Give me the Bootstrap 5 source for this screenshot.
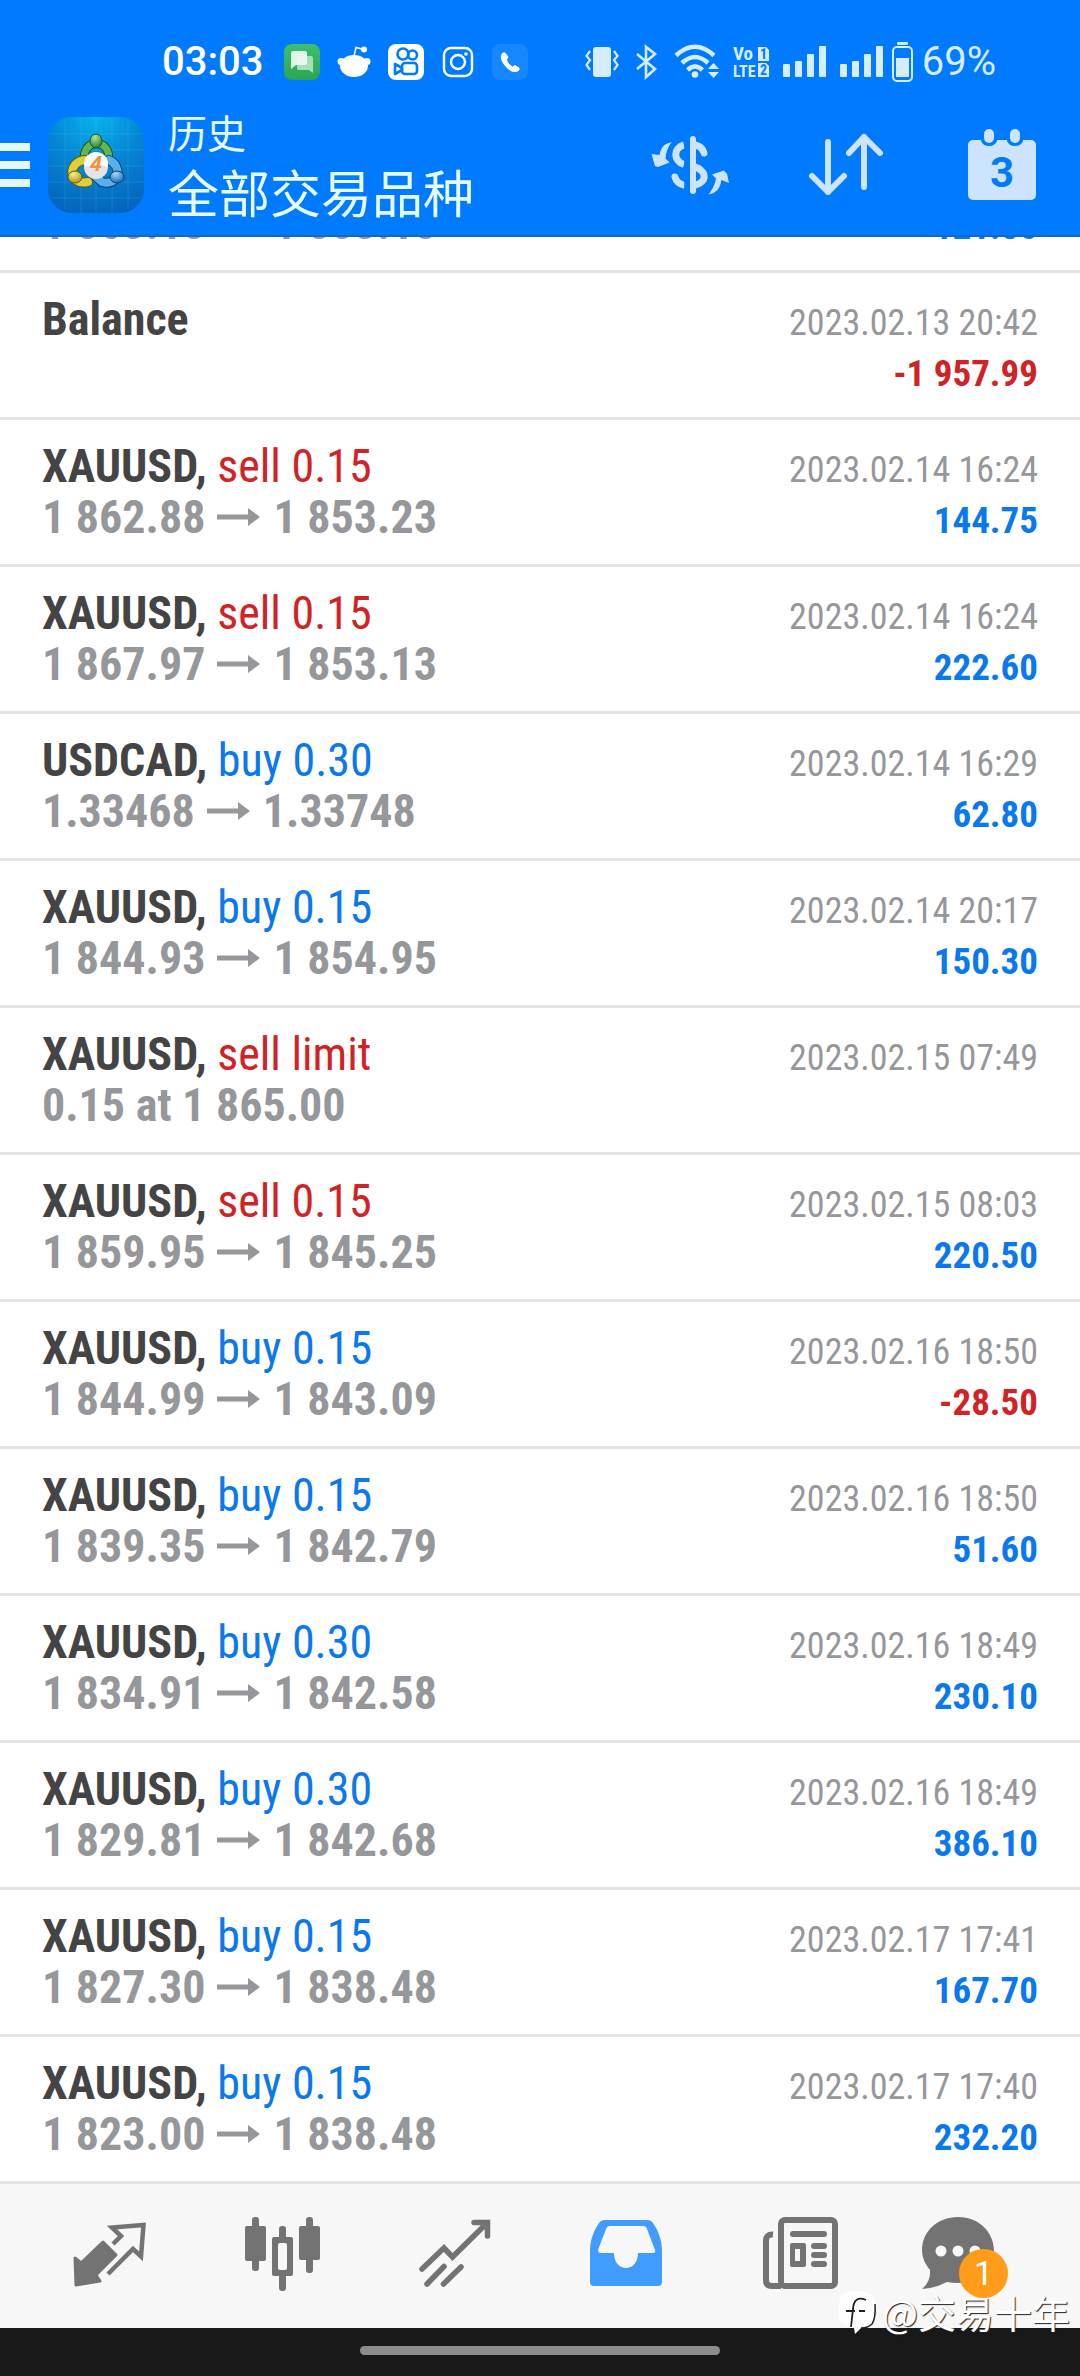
<!DOCTYPE html>
<html lang="zh-CN">
<head>
<meta charset="utf-8">
<meta name="viewport" content="width=device-width, initial-scale=1">
<title>历史 - 全部交易品种</title>
<link href="https://cdn.jsdelivr.net/npm/bootstrap@5.3.0/dist/css/bootstrap.min.css" rel="stylesheet">
<style>
:root{--mt-blue:#007aff;--mt-tint:#cce4ff;--mt-line:#e4e4e4;--mt-icon:#737373}
body{font-family:"Roboto Condensed",Roboto,"Noto Sans CJK SC",sans-serif;background:#fff}
svg{display:block;flex:none}
.top-area{background:var(--mt-blue);border-bottom:2px solid #1468c8;color:#fff}
.status-row{padding:42px 84px 0 162px;font:400 40px/40px Roboto,sans-serif}
.status-left{gap:16px}
.status-left .clock{margin-right:5px;font-weight:500}
.status-right{gap:14px;color:#d6ecff}
.status-end{gap:9px}
.app-row{padding:23px 0 10px}
.app-row .btn,.tab-row a{border:0;border-radius:0;padding:0}
.menu-btn{margin-right:18px}
.heading-block{margin-left:24px;font-family:"Noto Sans CJK SC",sans-serif;color:#e6fbff}
.heading-block h1{font-size:39px;line-height:52px;font-weight:400}
.heading-block p{font-size:51px;line-height:68px}
.tool-btn{width:156px;height:120px}
.history{flex-direction:column-reverse;scrollbar-width:none}
.history::-webkit-scrollbar{display:none}
.deal{padding:21px 42px;border-bottom:3px solid var(--mt-line)}
.deal-line{font-size:46px;line-height:51px;height:51px}
.symbol{color:#444;font-weight:700}
.price{color:#96979b;font-weight:700}
.price svg{display:inline-block;margin:0 13px 0 12px;vertical-align:7px}
.stamp{font-size:36px;line-height:40px;color:#96979b}
.profit{font-size:37px;line-height:40px;font-weight:700}
.up{color:#0a78ee}
.down{color:#cf2326}
.tab-row{background:#f7f7f7;padding:0 24px 6px;height:144px;color:var(--mt-icon)}
.tab-row a{color:inherit;width:172px}
.tab-row a.active{color:#429bff}
.count{left:39px;top:36px;width:49px;height:49px;background:#ff9c1a;color:#fff;font:400 34px/49px Roboto,sans-serif}
.gesture{background:#191919;height:48px;padding-top:18px}
.gesture span{display:block;width:33.333%;height:9px;border-radius:5px;background:#8c8c8c}
.credit{right:10px;bottom:36px;gap:5px;color:#fff;font:400 38px/56px "Noto Sans CJK SC",sans-serif;text-shadow:1px 1px 1px #222;pointer-events:none}
</style>
</head>
<body>
<div class="d-flex flex-column vh-100 position-relative overflow-hidden">
<header class="top-area">
  <div class="status-row d-flex justify-content-between align-items-center">
    <div class="status-left d-flex align-items-center">
      <span class="clock">03:03</span>
      <svg width="36" height="36" viewBox="0 0 36 36"><defs><linearGradient id="gm" x1="0" y1="0" x2="0" y2="1"><stop offset="0" stop-color="#3fc06c"/><stop offset="1" stop-color="#2ba552"/></linearGradient></defs><rect width="36" height="36" rx="8" fill="url(#gm)"/><path d="M15 12H27Q29 12 29 14V29L25 26H15Q13 26 13 24V14Q13 12 15 12Z" fill="#a8dfba"/><path d="M9 7H21Q23 7 23 9V19Q23 21 21 21H12L7 25V9Q7 7 9 7Z" fill="#f0fbf3" fill-opacity=".92"/></svg>
      <svg width="36" height="36" viewBox="0 0 36 36" fill="#fff"><ellipse cx="18" cy="22" rx="14" ry="11"/><circle cx="5" cy="17.500" r="3.500"/><circle cx="31" cy="17.500" r="3.500"/><circle cx="28" cy="5.500" r="3"/><path d="M18 12L20 3.500L28 5.500" fill="none" stroke="#fff" stroke-width="1.500"/></svg>
      <svg width="36" height="36" viewBox="0 0 36 36" fill="none" stroke="#007aff" stroke-width="2.600"><rect width="36" height="36" rx="8" fill="#fff" stroke="none"/><circle cx="15" cy="10" r="5.500"/><circle cx="24.500" cy="11" r="4.500"/><rect x="14" y="19" width="15" height="11" rx="3"/><path d="M14 24L7 20V30L14 26Z" stroke-linejoin="round"/></svg>
      <svg width="36" height="36" viewBox="0 0 36 36" fill="none" stroke="#fff" stroke-width="2.400"><rect x="4" y="4" width="28" height="28" rx="7"/><circle cx="18" cy="18" r="7"/><circle cx="26" cy="10" r="1.800" fill="#fff" stroke="none"/></svg>
      <svg width="36" height="36" viewBox="0 0 36 36"><rect width="36" height="36" rx="8" fill="#1687ff"/><path d="M11 9C8 12 9 17 14 22.500C19 28 24 29 27 26L27 24L23 21.500L20.500 23C17.500 21.500 15 18 14.500 15.500L16 13L13 9Z" fill="#fff" stroke="#fff" stroke-linejoin="round"/></svg>
    </div>
    <div class="status-right d-flex align-items-center">
      <svg width="36" height="36" viewBox="0 0 36 36"><rect x="9" y="3" width="18" height="30" rx="3" fill="currentColor"/><path d="M6 7L2.500 12L6 16L2.500 21L6 26M30 7L33.500 12L30 16L33.500 21L30 26" fill="none" stroke="currentColor" stroke-width="2.200"/></svg>
      <svg width="26" height="36" viewBox="0 0 26 36" fill="none" stroke="currentColor" stroke-width="2.600"><path d="M3 10L21 25L12 33V3L21 10L3 25"/></svg>
      <svg width="45" height="36" viewBox="0 0 45 36"><g fill="none" stroke="currentColor" stroke-width="4.500"><path d="M2 11.500Q21 -6 40 11.500M8 19Q21 7 34 19M13.500 26Q21 19 28.500 26"/></g><circle cx="21" cy="30.500" r="3.300" fill="currentColor"/><path d="M34 25L39.500 19L45 25ZM34 28L39.500 34L45 28Z" fill="currentColor"/></svg>
      <svg width="36" height="36" viewBox="0 0 36 36" fill="currentColor" font-family="Roboto Condensed, Roboto, sans-serif" font-weight="700"><text x="0" y="16" font-size="19">Vo</text><text x="0" y="33" font-size="16">LTE</text><path d="M25 3H33L36 6V17H25Z"/><path d="M25 19H33L36 22V33H25Z"/><text x="27" y="15" font-size="14" fill="#007aff">1</text><text x="27" y="31" font-size="14" fill="#007aff">2</text></svg>
      <svg width="43" height="36" viewBox="0 0 43 36" fill="currentColor"><rect y="20" width="7" height="13" rx="1"/><rect x="12" y="17" width="7" height="16" rx="1"/><rect x="24" y="10" width="7" height="23" rx="1"/><rect x="36" y="2" width="7" height="31" rx="1"/></svg>
      <div class="status-end d-flex align-items-center">
        <svg width="43" height="36" viewBox="0 0 43 36" fill="currentColor"><rect y="20" width="7" height="13" rx="1"/><rect x="12" y="17" width="7" height="16" rx="1"/><rect x="24" y="10" width="7" height="23" rx="1"/><rect x="36" y="2" width="7" height="31" rx="1"/></svg>
        <svg width="21" height="40" viewBox="0 0 21 40"><rect x="5" width="11" height="3" rx="1" fill="currentColor"/><rect x="1" y="5" width="19" height="34" rx="4" fill="none" stroke="currentColor" stroke-width="2"/><rect x="4" y="16" width="13" height="19" fill="currentColor"/></svg>
        <span>69%</span>
      </div>
    </div>
  </div>
  <div class="app-row d-flex align-items-center">
    <button type="button" class="btn menu-btn" aria-label="菜单"><svg width="30" height="44" viewBox="0 0 30 44" fill="#e6f8ff"><path d="M0 0H30V8H0ZM0 18H30V26H0ZM0 36H30V44H0Z"/></svg></button>
    <svg width="96" height="96" viewBox="0 0 96 96" role="img" aria-label="MetaTrader 4">
      <defs>
        <radialGradient id="gi" cx=".5" cy="0" r="1"><stop offset="0" stop-color="#06b4ee"/><stop offset=".5" stop-color="#0585d4"/><stop offset="1" stop-color="#0466bd"/></radialGradient>
        <radialGradient id="gg" cx=".4" cy=".25" r=".8"><stop offset="0" stop-color="#b6e69a"/><stop offset="1" stop-color="#1c7a28"/></radialGradient>
        <radialGradient id="gy" cx=".4" cy=".25" r=".8"><stop offset="0" stop-color="#f6ee8c"/><stop offset="1" stop-color="#a69410"/></radialGradient>
        <radialGradient id="gb" cx=".4" cy=".25" r=".8"><stop offset="0" stop-color="#a5daf7"/><stop offset="1" stop-color="#0e62ae"/></radialGradient>
      </defs>
      <rect width="96" height="96" rx="24" fill="url(#gi)"/>
      <path d="M17 4V92M33 0V96M48 0V96M64 0V96M80 4V92M4 17H92M0 33H96M0 49H96M0 65H96M4 81H92" stroke="#7cd2f5" stroke-opacity=".16" fill="none"/>
      <g fill="none" stroke-linecap="round">
        <path d="M37 42A12 12 0 1 1 60 42" stroke="#14591f" stroke-width="9"/><path d="M37 42A12 12 0 1 1 60 42" stroke="#63b552" stroke-width="7"/>
        <path d="M37 43C20 44 19 69 40 65" stroke="#665b08" stroke-width="10"/><path d="M37 43C20 44 19 69 40 65" stroke="#dccf3c" stroke-width="8"/>
        <path d="M61 43C75 49 71 70 54 65L46 58" stroke="#0b3f75" stroke-width="10"/><path d="M61 43C75 49 71 70 54 65L46 58" stroke="#5ab0e6" stroke-width="8"/>
      </g>
      <ellipse cx="48" cy="24" rx="6" ry="7" fill="url(#gg)" stroke="#14591f"/>
      <ellipse cx="27" cy="60" rx="7" ry="6" fill="url(#gy)" stroke="#665b08"/>
      <ellipse cx="69" cy="60" rx="7" ry="6" fill="url(#gb)" stroke="#0b3f75"/>
      <circle cx="48" cy="47" r="12" fill="#fff"/><path d="M36 50A12 12 0 0 0 60 50Q48 46 36 50Z" fill="#e4e4e4"/>
      <text x="48" y="54" text-anchor="middle" font-family="Open Sans, sans-serif" font-size="21" font-style="italic" font-weight="700" fill="#f3923d">4</text>
    </svg>
    <div class="heading-block flex-grow-1">
      <h1 class="m-0">历史</h1>
      <p class="m-0">全部交易品种</p>
    </div>
    <button type="button" class="btn tool-btn d-flex align-items-center justify-content-center" aria-label="货币"><svg width="100" height="86" viewBox="0 0 100 86"><g fill="none" stroke="#cce4ff" stroke-width="7"><path d="M44 23C33 26 33 39 44 42.500"/><path d="M44 63C39 62 36 59 35 55M64 31C63 27 60 24 55 23L53 22" stroke-linecap="round"/><path d="M52 44C68 48 68 61 53 63.500"/><path d="M53 17V69" stroke-width="6" stroke-linecap="round"/></g><path d="M44.200 40V75H50V40ZM44.200 15V50H50V15Z" fill="#007aff"/><path d="M31.700 20.300C25 21 21 25 19.500 33L11.500 32L15 44L18 45L29.500 40.500L25.500 36.500C26 30 28 25 31.700 20.300ZM68.500 72.500C77 71 80 66 81.500 58L89 61L87 52L84 48.500L72 52.500L76 56.500C75 63 72 68 68.500 72.500Z" fill="#cce4ff"/></svg></button>
    <button type="button" class="btn tool-btn d-flex align-items-center justify-content-center" aria-label="排序"><svg width="80" height="70" viewBox="0 0 80 70" fill="none" stroke="#cce4ff" stroke-width="6" stroke-linecap="round" stroke-linejoin="round"><path d="M22 12V62M6 46L22 62L38 46M58 57V7M43 23L58 7L74 23"/></svg></button>
    <button type="button" class="btn tool-btn d-flex align-items-center justify-content-center" aria-label="日历"><svg width="68" height="72" viewBox="0 0 68 72"><rect y="11" width="68" height="60" rx="5" fill="#cce4ff"/><path d="M13 9H29V12Q27 17 21 17Q15 17 13 12ZM39 9H55V12Q53 17 47 17Q41 17 39 12Z" fill="#007aff"/><rect x="16" width="10" height="14" rx="5" fill="#cce4ff"/><rect x="42" width="10" height="14" rx="5" fill="#cce4ff"/><text x="34" y="58" text-anchor="middle" font-family="Roboto, sans-serif" font-size="42" font-weight="700" fill="#007aff">3</text></svg></button>
  </div>
</header>

<main class="history d-flex flex-grow-1 overflow-auto">
<svg class="d-none"><symbol id="arr" viewBox="0 0 43 18"><path d="M0 6.500H31V0L43 9L31 18V11.500H0Z" fill="currentColor"/></symbol></svg>
<ul class="list-unstyled m-0">
<li class="deal"><div class="deal-line d-flex justify-content-between align-items-baseline"><span class="price">1 863.18<svg width="43" height="18"><use href="#arr"/></svg>1 853.18</span><span class="profit up">121.80</span></div></li>
<li class="deal"><div class="deal-line d-flex justify-content-between align-items-baseline"><span class="symbol">Balance</span><time class="stamp">2023.02.13 20:42</time></div><div class="deal-line d-flex justify-content-between align-items-baseline"><span class="price">&nbsp;</span><span class="profit down">-1 957.99</span></div></li>
<li class="deal"><div class="deal-line d-flex justify-content-between align-items-baseline"><span><span class="symbol">XAUUSD,</span> <span class="down">sell 0.15</span></span><time class="stamp">2023.02.14 16:24</time></div><div class="deal-line d-flex justify-content-between align-items-baseline"><span class="price">1 862.88<svg width="43" height="18"><use href="#arr"/></svg>1 853.23</span><span class="profit up">144.75</span></div></li>
<li class="deal"><div class="deal-line d-flex justify-content-between align-items-baseline"><span><span class="symbol">XAUUSD,</span> <span class="down">sell 0.15</span></span><time class="stamp">2023.02.14 16:24</time></div><div class="deal-line d-flex justify-content-between align-items-baseline"><span class="price">1 867.97<svg width="43" height="18"><use href="#arr"/></svg>1 853.13</span><span class="profit up">222.60</span></div></li>
<li class="deal"><div class="deal-line d-flex justify-content-between align-items-baseline"><span><span class="symbol">USDCAD,</span> <span class="up">buy 0.30</span></span><time class="stamp">2023.02.14 16:29</time></div><div class="deal-line d-flex justify-content-between align-items-baseline"><span class="price">1.33468<svg width="43" height="18"><use href="#arr"/></svg>1.33748</span><span class="profit up">62.80</span></div></li>
<li class="deal"><div class="deal-line d-flex justify-content-between align-items-baseline"><span><span class="symbol">XAUUSD,</span> <span class="up">buy 0.15</span></span><time class="stamp">2023.02.14 20:17</time></div><div class="deal-line d-flex justify-content-between align-items-baseline"><span class="price">1 844.93<svg width="43" height="18"><use href="#arr"/></svg>1 854.95</span><span class="profit up">150.30</span></div></li>
<li class="deal"><div class="deal-line d-flex justify-content-between align-items-baseline"><span><span class="symbol">XAUUSD,</span> <span class="down">sell limit</span></span><time class="stamp">2023.02.15 07:49</time></div><div class="deal-line d-flex align-items-baseline"><span class="price">0.15 at 1 865.00</span></div></li>
<li class="deal"><div class="deal-line d-flex justify-content-between align-items-baseline"><span><span class="symbol">XAUUSD,</span> <span class="down">sell 0.15</span></span><time class="stamp">2023.02.15 08:03</time></div><div class="deal-line d-flex justify-content-between align-items-baseline"><span class="price">1 859.95<svg width="43" height="18"><use href="#arr"/></svg>1 845.25</span><span class="profit up">220.50</span></div></li>
<li class="deal"><div class="deal-line d-flex justify-content-between align-items-baseline"><span><span class="symbol">XAUUSD,</span> <span class="up">buy 0.15</span></span><time class="stamp">2023.02.16 18:50</time></div><div class="deal-line d-flex justify-content-between align-items-baseline"><span class="price">1 844.99<svg width="43" height="18"><use href="#arr"/></svg>1 843.09</span><span class="profit down">-28.50</span></div></li>
<li class="deal"><div class="deal-line d-flex justify-content-between align-items-baseline"><span><span class="symbol">XAUUSD,</span> <span class="up">buy 0.15</span></span><time class="stamp">2023.02.16 18:50</time></div><div class="deal-line d-flex justify-content-between align-items-baseline"><span class="price">1 839.35<svg width="43" height="18"><use href="#arr"/></svg>1 842.79</span><span class="profit up">51.60</span></div></li>
<li class="deal"><div class="deal-line d-flex justify-content-between align-items-baseline"><span><span class="symbol">XAUUSD,</span> <span class="up">buy 0.30</span></span><time class="stamp">2023.02.16 18:49</time></div><div class="deal-line d-flex justify-content-between align-items-baseline"><span class="price">1 834.91<svg width="43" height="18"><use href="#arr"/></svg>1 842.58</span><span class="profit up">230.10</span></div></li>
<li class="deal"><div class="deal-line d-flex justify-content-between align-items-baseline"><span><span class="symbol">XAUUSD,</span> <span class="up">buy 0.30</span></span><time class="stamp">2023.02.16 18:49</time></div><div class="deal-line d-flex justify-content-between align-items-baseline"><span class="price">1 829.81<svg width="43" height="18"><use href="#arr"/></svg>1 842.68</span><span class="profit up">386.10</span></div></li>
<li class="deal"><div class="deal-line d-flex justify-content-between align-items-baseline"><span><span class="symbol">XAUUSD,</span> <span class="up">buy 0.15</span></span><time class="stamp">2023.02.17 17:41</time></div><div class="deal-line d-flex justify-content-between align-items-baseline"><span class="price">1 827.30<svg width="43" height="18"><use href="#arr"/></svg>1 838.48</span><span class="profit up">167.70</span></div></li>
<li class="deal"><div class="deal-line d-flex justify-content-between align-items-baseline"><span><span class="symbol">XAUUSD,</span> <span class="up">buy 0.15</span></span><time class="stamp">2023.02.17 17:40</time></div><div class="deal-line d-flex justify-content-between align-items-baseline"><span class="price">1 823.00<svg width="43" height="18"><use href="#arr"/></svg>1 838.48</span><span class="profit up">232.20</span></div></li>
</ul>
</main>

<nav class="tab-row d-flex justify-content-between flex-shrink-0">
  <a href="#quotes" class="d-flex align-items-center justify-content-center" aria-label="报价"><svg width="80" height="80" viewBox="0 0 80 80"><path d="M5 45L11 50L33 29L46 42L26 62L30 68L6 72Z" fill="currentColor" stroke="currentColor" stroke-width="3" stroke-linejoin="round"/><path d="M43 31L51 23L42 14.500L73.500 12L71 43.500L63 36L38 61" fill="none" stroke="currentColor" stroke-width="4.500"/></svg></a>
  <a href="#charts" class="d-flex align-items-center justify-content-center" aria-label="图表"><svg width="80" height="80" viewBox="0 0 80 80" fill="currentColor"><rect x="3" y="13" width="21" height="35" rx="2"/><rect x="10" y="4" width="7" height="54" rx="3"/><rect x="57" y="13" width="21" height="34" rx="2"/><rect x="64" y="4" width="7" height="56" rx="3"/><rect x="37" y="13" width="7" height="65" rx="3"/><rect x="30" y="24" width="21" height="39" rx="2"/><rect x="36" y="30" width="9" height="27" rx="2" fill="#f7f7f7"/></svg></a>
  <a href="#trade" class="d-flex align-items-center justify-content-center" aria-label="交易"><svg width="80" height="80" viewBox="0 0 80 80" fill="none" stroke="currentColor" stroke-width="5.500" stroke-linecap="round"><path d="M8 56L30 35L38.500 44L73 10M60 9.500H73.500V23M13 71L30 53.500M29.500 71L47 54"/></svg></a>
  <a href="#history" class="active d-flex align-items-center justify-content-center" aria-label="历史" aria-current="page"><svg width="80" height="80" viewBox="0 0 80 80"><path fill="currentColor" fill-rule="evenodd" d="M4 69V38C4 25 9 16 13 10Q15 7 19 7H61Q65 7 67 10C71 16 76 25 76 38V69Q76 73 72 73H8Q4 73 4 69ZM20 16L12 37Q12 40 15 40H28C28 60 52 60 52 40H67Q70 40 69 37L61 16Q60 13 57 13H24Q21 13 20 16Z"/></svg></a>
  <a href="#news" class="d-flex align-items-center justify-content-center" aria-label="新闻"><svg width="80" height="80" viewBox="0 0 80 80"><g fill="none" stroke="currentColor" stroke-width="6"><rect x="23" y="7" width="54" height="66" rx="4"/><path d="M15 21.500Q8 21 8 28V67Q8 73 14 73H23"/></g><path fill="currentColor" fill-rule="evenodd" d="M34 30H46Q48 30 48 32V52Q48 54 46 54H34Q32 54 32 52V32Q32 30 34 30ZM37 36V48H42V36Z"/><g fill="currentColor"><rect x="32" y="18" width="37" height="6" rx="3"/><rect x="53" y="30" width="16" height="6" rx="3"/><rect x="53" y="39" width="16" height="6" rx="3"/><rect x="53" y="48" width="16" height="6" rx="3"/></g></svg></a>
  <a href="#messages" class="d-flex align-items-center justify-content-center text-decoration-none" aria-label="消息"><span class="position-relative"><svg width="100" height="80" viewBox="0 0 100 80"><path d="M38 4C59 4 74 19 74 38C74 60 54 74 27 69Q16 75 2 76Q11 68 10 57C5 51 2 44 2 37C2 19 17 4 38 4Z" fill="currentColor"/><g fill="#f7f7f7"><circle cx="21" cy="38" r="5.500"/><circle cx="38" cy="38" r="5.500"/><circle cx="55" cy="38" r="5.500"/></g></svg><span class="count position-absolute rounded-circle text-center">1</span></span></a>
</nav>
<div class="gesture flex-shrink-0"><span class="mx-auto"></span></div>
<div class="credit position-absolute d-flex align-items-center"><svg width="40" height="44" viewBox="0 0 40 44"><path d="M8 3Q20 -1 32 3Q37 5 38 14Q39 28 35 34Q31 38 24 38L18 44L17 38Q7 38 3 31Q0 20 3 9Q4 5 8 3Z" fill="#fff"/><path d="M38 14Q39 28 35 34Q31 38 24 38" fill="none" stroke="#222" stroke-width="1.500"/><path d="M29 10Q17 5 16 19L14 37M9 21H18M22 21H28" fill="none" stroke="#222" stroke-width="1.800"/></svg><span>@交易十年</span></div>
</div>
<script src="https://cdn.jsdelivr.net/npm/bootstrap@5.3.0/dist/js/bootstrap.bundle.min.js"></script>
</body>
</html>
